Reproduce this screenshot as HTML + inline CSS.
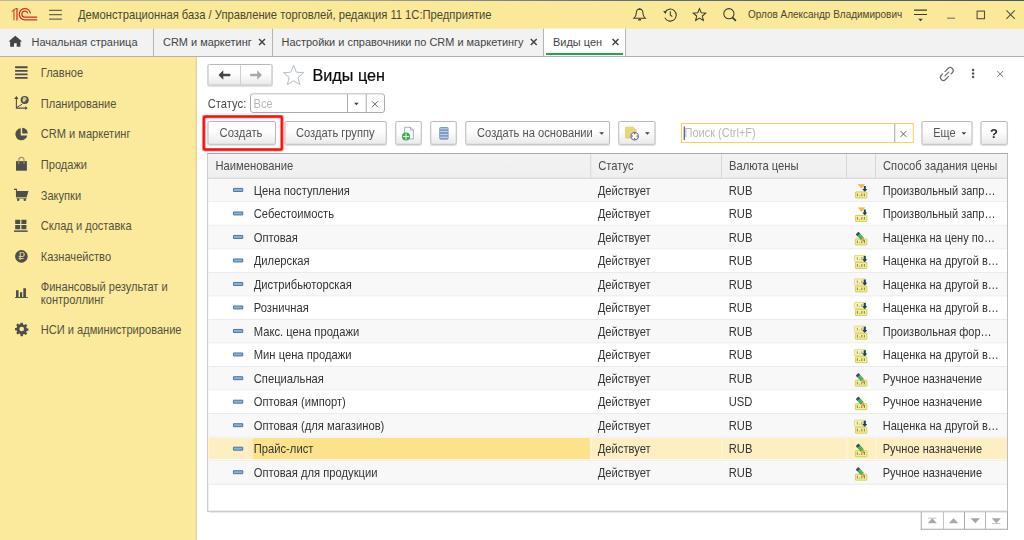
<!DOCTYPE html>
<html lang="ru">
<head>
<meta charset="utf-8">
<title>Виды цен</title>
<style>
*{box-sizing:border-box;margin:0;padding:0}
html,body{width:1024px;height:540px;overflow:hidden;background:#fff}
#sc{position:absolute;left:0;top:0;width:4096px;height:2160px;transform:scale(.25);transform-origin:0 0}
#zm{position:absolute;left:0;top:0;width:4096px;height:2160px}

body{position:relative;font-family:"Liberation Sans",sans-serif;font-size:48.4px;line-height:56px;color:#333;-webkit-font-smoothing:antialiased}
.abs,.t{position:absolute;white-space:nowrap}
.t,.c,.hc span{transform:scaleX(.926);transform-origin:0 50%}
.hc span{display:inline-block}
svg{position:absolute;overflow:visible}
.defs{width:0;height:0;left:-40px;top:-40px}
/* top bar */
.topline{position:absolute;left:0;top:0;width:4096px;height:4px;background:linear-gradient(90deg,#b9b7a6 0,#a9aba3 30%,#5d737d 60%,#3f5a68 100%)}
.topbar{position:absolute;left:0;top:0;width:4096px;height:116px;background:#fbe99a}
.title{left:312px;top:30.88px;color:#4a4635}
.user{left:2991.6px;top:28.64px;font-size:43.08px;color:#4a4635}
/* tabs */
.tabs{position:absolute;left:0;top:115px;width:4096px;height:113px;background:#f2f2f2;border-bottom:4px solid #b2b2b2}
.tabsep{position:absolute;top:115px;width:4px;height:109px;background:#b4b4b4}
.tabact{position:absolute;left:2176px;top:115px;width:326px;height:109px;background:#fff}
.tabul{position:absolute;left:2184px;top:212px;width:308px;height:8px;background:#21a453}
.tab{top:139.24px;color:#444;font-size:47.32px}
/* sidebar */
.side{position:absolute;left:0;top:228px;width:787px;height:1932px;background:#fbea9c;border-right:4px solid #d9cd8e}
.si{left:163.2px;color:#55513f;font-size:47.88px}
/* content */
.btn{position:absolute;top:484px;height:95px;border:4px solid #b9b9b9;border-radius:8px;background:linear-gradient(#ffffff 0,#fdfdfd 45%,#eaeaea 100%);box-shadow:0 3px 3px rgba(0,0,0,.13);color:#444;text-align:center;white-space:nowrap}
.btn span{position:absolute;top:15px;left:0;white-space:nowrap;font-size:48px;color:#555;transform-origin:0 50%}
.h1{transform:none;left:1250px;top:259.6px;font-size:64.8px;line-height:80px;color:#0a0a0a;-webkit-text-stroke:0.8px #0a0a0a}
.lbl{left:831px;top:386.88px;color:#4a4a4a}
.inp{position:absolute;left:1000px;top:373px;width:540px;height:79px;border:4px solid #ababab;border-radius:12px;background:#fff}
.inp i{position:absolute;top:0;width:4px;height:71px;background:#ababab}
.ph{color:#b9b9b9}
.srch{position:absolute;left:2724px;top:492px;width:931px;height:80px;border:4px solid #f8d05c;background:#fff}
.srch i{position:absolute;left:849px;top:0;width:4px;height:72px;background:#a5a5a5}
.red{position:absolute;left:810px;top:461px;width:323px;height:143px;border:11px solid #ff0808;border-radius:8px}
/* grid */
.grid{position:absolute;left:829px;top:612px;width:3203px;height:1435px;border:4px solid #bdbdbd;border-top-color:#a9a9a9;background:#fff;overflow:hidden;box-shadow:0 3px 3px rgba(0,0,0,.08)}
.ghead{position:absolute;left:0;top:0;width:3200px;height:99.2px;background:linear-gradient(#f3f3f3,#efefef);border-bottom:4px solid #c4c4c4}
.hc{position:absolute;top:0;height:96px;border-right:4px solid #d6d6d6;padding:18.88px 0 0 28.4px;color:#4a4a4a;white-space:nowrap;overflow:hidden}
.hc.last{border-right:0}
.row{position:absolute;left:0;width:3200px;height:94.12px;border-bottom:4px solid #ebebeb;background:#fff}
.row.alt{background:#f8f8f8}
.row.sel{background:#fdfdfd}
.hl{position:absolute;left:0;top:1.6px;width:3200px;height:84.4px;background:#fdefc2}
.hl i{position:absolute;top:0;width:4px;height:84.4px;background:#fef7e0}
.cur{position:absolute;left:178px;top:1.6px;width:1348px;height:84.4px;background:#fde28c}
.c{position:absolute;top:0;white-space:nowrap;color:#343434}
.c1{left:181.6px}.c2{left:1558px}.c3{left:2082px}.c5{left:2698.4px;font-size:47.64px}
.bar{left:99px;top:36.4px}
.mi{left:2583px;top:20.6px}

</style>
</head>
<body>
<div id="sc"><div id="zm">
<div class="topbar"></div>
<div class="topline"></div>
<svg style="left:0;top:0" width="160" height="112" viewBox="0 0 40 28">
 <path d="M11.5 11.7L13.95 10V20.4" fill="none" stroke="#de2a26" stroke-width="1"/><path d="M13.2 9.4L16.3 7.9H17.6V20.4H16.35V9.1L13.6 10.3z" fill="#de2a26"/>
 <path d="M30.45 13.6A5.6 5.6 0 1 0 24.9 19.8H37.2" fill="none" stroke="#de2a26" stroke-width="1.2"/>
 <path d="M27.85 13.3A3.05 3.05 0 1 0 24.9 17.2H37.2" fill="none" stroke="#de2a26" stroke-width="1.2"/>
</svg>
<svg style="left:196px;top:39.2px" width="52" height="44" viewBox="0 0 13 11"><path d="M.1 .65h12.8M.1 4.9h12.8M.1 9.4h12.8" stroke="#6a664e" stroke-width="1.15"/></svg>
<div class="t title">Демонстрационная база / Управление торговлей, редакция 11 1С:Предприятие</div>
<svg style="left:2532px;top:32px" width="56" height="56" viewBox="0 0 14 14"><path d="M6.6 1.1c-2.3 0-3.3 1.7-3.3 3.8 0 2.7-1.1 4.1-2.5 5.4h11.6c-1.4-1.3-2.5-2.7-2.5-5.4 0-2.1-1-3.8-3.3-3.8z" fill="none" stroke="#3c3a30" stroke-width="1.05"/><path d="M5.2 11.8h2.8" stroke="#3c3a30" stroke-width="1.4"/><path d="M6.6 0.3v1" stroke="#3c3a30" stroke-width="1.2"/></svg>
<svg style="left:2650px;top:32px" width="60" height="56" viewBox="0 0 15 14"><path d="M2.5 4.2A6 6 0 1 1 2.3 9.6" fill="none" stroke="#3c3a30" stroke-width="1.05"/><path d="M0.5 3.3l3.6-.4-.9 3.2z" fill="#3c3a30"/><path d="M7.8 3.2v3.8l2 1.7" fill="none" stroke="#3c3a30" stroke-width="1.05"/></svg>
<svg style="left:2770px;top:31.2px" width="56" height="56" viewBox="0 0 14 14"><path d="M7 0.9l1.75 4.1 4.45.35-3.4 2.9 1.05 4.35L7 10.25 3.15 12.6 4.2 8.25.8 5.35l4.45-.35z" fill="none" stroke="#3c3a30" stroke-width="1.05" stroke-linejoin="miter"/></svg>
<svg style="left:2892px;top:32px" width="56" height="56" viewBox="0 0 14 14"><circle cx="5.9" cy="5.7" r="5.1" fill="none" stroke="#3c3a30" stroke-width="1.05"/><path d="M9.6 9.6l3.3 3.2" stroke="#3c3a30" stroke-width="1.7"/></svg>
<div class="t user">Орлов Александр Владимирович</div>
<svg style="left:3656px;top:38px" width="56" height="48" viewBox="0 0 14 12"><path d="M0 .6h13M0 5h13" stroke="#3c3a30" stroke-width="1.1"/><path d="M4.2 9.2h4.6l-2.3 2.6z" fill="#3c3a30"/></svg>
<svg style="left:3788px;top:69.6px" width="36" height="8" viewBox="0 0 9 2"><path d="M0 .7h8" stroke="#8c8870" stroke-width="1.3"/></svg>
<svg style="left:3906px;top:42px" width="36" height="36" viewBox="0 0 9 9"><rect x=".6" y=".6" width="7.4" height="7.6" fill="none" stroke="#55513f" stroke-width="1.1"/></svg>
<svg style="left:4024px;top:40px" width="40" height="40" viewBox="0 0 10 10"><path d="M.4.3l8.4 8.6M8.8.300L.4 8.9" stroke="#55513f" stroke-width="1.1"/></svg>

<div class="tabs"></div>
<div class="tabact"></div>
<div class="tabsep" style="left:612px"></div>
<div class="tabsep" style="left:1088px"></div>
<div class="tabsep" style="left:2172px"></div>
<div class="tabsep" style="left:2500px"></div>
<div class="tabul"></div>
<svg style="left:32px;top:140px" width="64" height="52" viewBox="8 35 16 13"><path d="M15.3 35.7L22.1 41.5H20.4V46.8H16.7V43.3H14V46.8H10.1V41.5H8.5z" fill="#444"/></svg>
<div class="t tab" style="left:126px">Начальная страница</div>
<div class="t tab" style="left:652px">CRM и маркетинг</div>
<svg style="left:1034px;top:154.4px" width="28" height="28" viewBox="0 0 6.4 6.4"><path d="M0.5 0.5l5.4 5.4M5.9 0.5L0.5 5.9" stroke="#3e3e3e" stroke-width="1.3" fill="none"/></svg>
<div class="t tab" style="left:1126px">Настройки и справочники по CRM и маркетингу</div>
<svg style="left:2121.2px;top:154.4px" width="28" height="28" viewBox="0 0 6.4 6.4"><path d="M0.5 0.5l5.4 5.4M5.9 0.5L0.5 5.9" stroke="#3e3e3e" stroke-width="1.3" fill="none"/></svg>
<div class="t tab" style="left:2212px">Виды цен</div>
<svg style="left:2448px;top:154.4px" width="28" height="28" viewBox="0 0 6.4 6.4"><path d="M0.5 0.5l5.4 5.4M5.9 0.5L0.5 5.9" stroke="#3e3e3e" stroke-width="1.3" fill="none"/></svg>
<div class="side"></div>
<svg style="left:60px;top:265.2px" width="52" height="52" viewBox="0 0 13 13"><path d="M0.1 1h12.5M0.1 4.55h12.5M0.1 8.1h12.5M0.1 11.65h12.5" stroke="#4e4e4e" stroke-width="1.85"/></svg>
<div class="t si" style="top:263.04px">Главное</div>
<svg style="left:48px;top:376px" width="80" height="72" viewBox="12 94 20 18"><path d="M16.4 97.5V108.1H25.6" fill="none" stroke="#4e4e4e" stroke-width="1.1"/><path d="M14.2 99L16.4 95.9 18.6 99zM25.2 106.2L27.8 108.1 25.2 110z" fill="#4e4e4e"/><path d="M16.8 107.4L22 104.3" stroke="#4e4e4e" stroke-width="1"/><circle cx="24.7" cy="99.9" r="4" fill="#4e4e4e"/><text x="24.6" y="102.3" text-anchor="middle" font-family="DejaVu Sans, sans-serif" font-weight="bold" font-size="6.4" fill="#e6d994">₽</text></svg>
<div class="t si" style="top:387.04px">Планирование</div>
<svg style="left:58.8px;top:511.2px" width="53.6" height="53.6" viewBox="0 0 13 13"><path d="M5.8.6A5.8 5.8 0 1 0 12.1 7.4H5.8z" fill="#4e4e4e"/><path d="M7.2 0A5.4 5.4 0 0 1 12.6 5.6H7.2z" fill="#4e4e4e"/></svg>
<div class="t si" style="top:507.04px">CRM и маркетинг</div>
<svg style="left:56px;top:620px" width="64" height="72" viewBox="14 155 16 18"><path d="M16 161.1H26.9V170.7H16z" fill="#4e4e4e"/><path d="M18.8 164V160a2.6 2.6 0 0 1 5.2 0V164" fill="none" stroke="#9c966e" stroke-width="1.15"/></svg>
<div class="t si" style="top:631.04px">Продажи</div>
<svg style="left:48px;top:744px" width="80" height="72" viewBox="12 186 20 18"><path d="M14 189.4h2.5v7.8" fill="none" stroke="#4e4e4e" stroke-width="1.1"/><path d="M16.5 191H28.5L26.7 196.9H16.5z" fill="#4e4e4e"/><path d="M16.5 198.1H26.9" stroke="#4e4e4e" stroke-width=".9"/><rect x="17.1" y="198.4" width="2.2" height="2.7" rx=".8" fill="#4e4e4e"/><rect x="23.7" y="198.4" width="2.2" height="2.7" rx=".8" fill="#4e4e4e"/></svg>
<div class="t si" style="top:755.04px">Закупки</div>
<svg style="left:56px;top:878.8px" width="56" height="52" viewBox="0 0 14 13"><path d="M1.2 0h5v4.3h-5zM7.4 0h5v4.3h-5zM1.2 5.3h5v4.3h-5zM7.4 5.3h5v4.3h-5z" fill="#4e4e4e"/><path d="M0 11.4h13.7" stroke="#4e4e4e" stroke-width="1.5"/></svg>
<div class="t si" style="top:875.04px">Склад и доставка</div>
<svg style="left:60px;top:1000px" width="52" height="52" viewBox="0 0 13 13"><circle cx="6.4" cy="6.4" r="6.3" fill="#4e4e4e"/><text x="6.7" y="10.3" text-anchor="middle" font-family="DejaVu Sans, sans-serif" font-size="10.6" fill="#d9cc8a">₽</text></svg>
<div class="t si" style="top:999.04px">Казначейство</div>
<svg style="left:60px;top:1153.2px" width="52" height="40" viewBox="0 0 13 10"><path d="M1 1.9h2.6v7H1zM5 3.9h2.2v5H5zM8.3 -.1h2.7v9H8.3z" fill="#4e4e4e"/><path d="M0.1 9.25h12.7" stroke="#4e4e4e" stroke-width=".95"/></svg>
<div class="t si" style="top:1121.04px;line-height:52px">Финансовый результат и<br>контроллинг</div>
<svg style="left:60px;top:1291.2px" width="52" height="52" viewBox="0 0 13 13"><path d="M5.3 0h2.2l.3 1.7 1.1.5 1.5-1 1.5 1.5-1 1.5.5 1.1 1.7.3v2.2l-1.7.3-.5 1.1 1 1.5-1.5 1.5-1.5-1-1.1.5-.3 1.7H5.3L5 11.2l-1.1-.5-1.5 1L.9 10.2l1-1.5-.5-1.1L-.3 7.3V5.1l1.7-.3.5-1.1-1-1.5L2.4.7l1.5 1L5 1.2z" fill="#4e4e4e" transform="translate(0.3,0.1)"/><circle cx="6.7" cy="6.3" r="2.3" fill="#fbea9c"/></svg>
<div class="t si" style="top:1291.04px">НСИ и администрирование</div>
<div class="btn" style="left:830px;top:256.4px;width:260px;height:85.2px"></div>
<div class="abs" style="left:960px;top:262.4px;width:4px;height:76px;background:#cfcfcf"></div>
<svg style="left:874px;top:281.2px" width="48" height="40" viewBox="0 0 12 10"><path d="M0 4.8L4.8 0v3.5h7v2.6h-7v3.5z" fill="#444"/></svg>
<svg style="left:1000px;top:281.2px" width="48" height="40" viewBox="0 0 12 10"><path d="M12 4.8L7.2 0v3.5h-7v2.6h7v3.5z" fill="#a8a8a8"/></svg>
<svg style="left:1128.8px;top:257.2px" width="92.4" height="88" viewBox="0 0 21 20"><path d="M10.3 1l2.5 6.2 6.6.5-5.1 4.3 1.6 6.5-5.6-3.5-5.6 3.5 1.6-6.5L1.2 7.7l6.6-.5z" fill="#fff" stroke="#b4bcc6" stroke-width=".9"/></svg>
<div class="t h1">Виды цен</div>
<svg style="left:3744px;top:256px" width="88" height="80" viewBox="936 64 22 20"><g transform="translate(946.8 74) rotate(-45)" fill="none" stroke="#6b6b6b" stroke-width="1.15" stroke-linecap="round"><path d="M0.4 -3H4.8A3 3 0 0 1 4.8 3H3"/><path d="M-0.4 3H-4.8A3 3 0 0 1 -4.8 -3H-3"/><path d="M-2.7 0H2.7"/></g></svg>
<svg style="left:3886px;top:275.2px" width="16" height="40" viewBox="0 0 4 10"><circle cx="1.6" cy="1.3" r="1.25" fill="#555"/><circle cx="1.6" cy="4.8" r="1.25" fill="#555"/><circle cx="1.6" cy="8.3" r="1.25" fill="#555"/></svg>
<svg style="left:3988px;top:283.2px" width="25.6" height="25.6" viewBox="0 0 6.4 6.4"><path d="M.3 .3l5.8 5.8M6.1 .3L.3 6.1" stroke="#707070" stroke-width="1" fill="none"/></svg>

<div class="t lbl">Статус:</div>
<div class="inp"><i style="left:384px"></i><i style="left:459px"></i></div>
<div class="t ph" style="left:1014px;top:386.88px">Все</div>
<svg style="left:1416.4px;top:410.6px" width="19.2" height="10.4" viewBox="0 0 4.8 2.6"><path d="M0 0h4.8L2.4 2.6z" fill="#444"/></svg>
<svg style="left:1487.2px;top:403.6px" width="25.6" height="25.6" viewBox="0 0 6.4 6.4"><path d="M.3 .3l5.8 5.8M6.1 .3L.3 6.1" stroke="#5a5a5a" stroke-width=".95" fill="none"/></svg>

<div class="btn" style="left:830px;width:274px"><span style="left:44px;transform:scaleX(.943)">Создать</span></div>
<div class="btn" style="left:1138px;width:409px"><span style="left:41.6px;transform:scaleX(.925)">Создать группу</span></div>
<div class="btn" style="left:1581.2px;width:106px"></div>
<svg style="left:1608px;top:507.2px" width="48" height="56" viewBox="0 0 12 14"><path d="M2.6 .5h6L11.4 3.3v8.9H2.6z" fill="#fdfdfd" stroke="#9aa9bd" stroke-width=".9"/><path d="M8.5 .5v2.9h2.9" fill="none" stroke="#9aa9bd" stroke-width=".9"/><circle cx="4" cy="9.7" r="4.05" fill="#35ad4a"/><path d="M1 9.7h6M4 6.7V12.7" stroke="#e9f7ea" stroke-width="1.1"/></svg>
<div class="btn" style="left:1721.2px;width:106px"></div>
<svg style="left:1756px;top:507.2px" width="40" height="56" viewBox="0 0 10 14"><rect x=".2" y=".2" width="9.4" height="12.9" rx="1.8" fill="#7b9dbf"/><path d="M1.1 1.9h7.6M1.1 4.8h7.6M1.1 7.7h7.6M1.1 10.6h7.6" stroke="#bcd3e8" stroke-width="1.05"/></svg>
<div class="btn" style="left:1861.2px;width:578.8px"><span style="left:43.2px;transform:scaleX(.93)">Создать на основании</span></div>
<svg style="left:2397.2px;top:529.4px" width="19.2" height="10.4" viewBox="0 0 4.8 2.6"><path d="M0 0h4.8L2.4 2.6z" fill="#444"/></svg>
<div class="btn" style="left:2473.2px;width:149.2px"></div>
<svg style="left:2501.2px;top:507.2px" width="56" height="56" viewBox="0 0 14 14"><path d="M.4.4h7.4l3 3v7.8H.4z" fill="#eed477" stroke="#dcc25e" stroke-width=".7"/><circle cx="9.4" cy="9.4" r="3.7" fill="#fff" stroke="#3f74b8" stroke-width="1.1"/><path d="M9.4 6.2v1.4M9.4 11.2v1.4M6.2 9.4h1.4M11.2 9.4h1.4" stroke="#d94a3a" stroke-width="1.3"/></svg>
<svg style="left:2580.4px;top:529.4px" width="19.2" height="10.4" viewBox="0 0 4.8 2.6"><path d="M0 0h4.8L2.4 2.6z" fill="#444"/></svg>
<div class="srch"><i></i></div>
<div class="abs" style="left:2735px;top:506px;width:4px;height:54px;background:#3a3a3a"></div>
<div class="t ph" style="left:2738.4px;top:503.12px;font-size:47.64px">Поиск (Ctrl+F)</div>
<svg style="left:3600.8px;top:522.8px" width="25.6" height="25.6" viewBox="0 0 6.4 6.4"><path d="M.3 .3l5.8 5.8M6.1 .3L.3 6.1" stroke="#5a5a5a" stroke-width=".95" fill="none"/></svg>
<div class="btn" style="left:3686px;width:204px"><span style="left:42.8px;transform:scaleX(.915)">Еще</span></div>
<svg style="left:3846.4px;top:529.4px" width="19.2" height="10.4" viewBox="0 0 4.8 2.6"><path d="M0 0h4.8L2.4 2.6z" fill="#444"/></svg>
<div class="btn" style="left:3921.6px;width:109.2px"><span style="font-weight:bold;font-size:52px;color:#2a2a2a;top:17.6px;left:34.8px">?</span></div>
<div class="red"></div>
<div class="grid">
<div class="ghead"><div class="hc" style="left:0;width:1532px;padding-left:29.2px"><span>Наименование</span></div><div class="hc" style="left:1532px;width:523px"><span>Статус</span></div><div class="hc" style="left:2055px;width:500px"><span>Валюта цены</span></div><div class="hc" style="left:2555px;width:116px"></div><div class="hc last" style="left:2671px;width:528px"><span>Способ задания цены</span></div></div>
<div class="row alt" style="top:99.2px"><svg class="bar" width="48" height="24" viewBox="0 0 12 6"><rect x="0.45" y="0.45" width="9.3" height="3" rx="0.1" fill="#86b3dc" stroke="#3f6b98" stroke-width="0.9"/></svg><span class="c c1" style="top:19.68px">Цена поступления</span><span class="c c2" style="top:19.68px">Действует</span><span class="c c3" style="top:19.68px">RUB</span><svg class="mi" width="60" height="60" viewBox="-1 0 15 15"><path d="M2.7 .1h7.4L6.4 4.4z" fill="#f2b63c"/><path d="M3.6 .5h5.6" stroke="#f7d27a" stroke-width=".6"/><path d="M8.8 2h2v3h1.5L9.8 7.9 7.3 5h1.5z" fill="#21405a"/><rect x=".4" y="7.95" width="11.5" height="6" rx=".5" fill="#f5ef96" stroke="#d1c443" stroke-width=".8"/><path d="M2.4 9.6 v2.6M4.7 11.6 v.6M6.8 9.6 v2.6M9.4 9.6 v2.6" stroke="#8d8b66" stroke-width="1.1" fill="none"/></svg><span class="c c5" style="top:19.92px">Произвольный запр…</span></div>
<div class="row" style="top:193.32px"><svg class="bar" width="48" height="24" viewBox="0 0 12 6"><rect x="0.45" y="0.45" width="9.3" height="3" rx="0.1" fill="#86b3dc" stroke="#3f6b98" stroke-width="0.9"/></svg><span class="c c1" style="top:17.56px">Себестоимость</span><span class="c c2" style="top:17.56px">Действует</span><span class="c c3" style="top:17.56px">RUB</span><svg class="mi" width="60" height="60" viewBox="-1 0 15 15"><path d="M2.7 .1h7.4L6.4 4.4z" fill="#f2b63c"/><path d="M3.6 .5h5.6" stroke="#f7d27a" stroke-width=".6"/><path d="M8.8 2h2v3h1.5L9.8 7.9 7.3 5h1.5z" fill="#21405a"/><rect x=".4" y="7.95" width="11.5" height="6" rx=".5" fill="#f5ef96" stroke="#d1c443" stroke-width=".8"/><path d="M2.4 9.6 v2.6M4.7 11.6 v.6M6.8 9.6 v2.6M9.4 9.6 v2.6" stroke="#8d8b66" stroke-width="1.1" fill="none"/></svg><span class="c c5" style="top:17.8px">Произвольный запр…</span></div>
<div class="row alt" style="top:287.44px"><svg class="bar" width="48" height="24" viewBox="0 0 12 6"><rect x="0.45" y="0.45" width="9.3" height="3" rx="0.1" fill="#86b3dc" stroke="#3f6b98" stroke-width="0.9"/></svg><span class="c c1" style="top:19.44px">Оптовая</span><span class="c c2" style="top:19.44px">Действует</span><span class="c c3" style="top:19.44px">RUB</span><svg class="mi" width="60" height="60" viewBox="-1 0 15 15"><rect x=".4" y="7.95" width="11.5" height="6" rx=".5" fill="#f5ef96" stroke="#d1c443" stroke-width=".8"/><path d="M2.4 9.6 v2.6M4.7 11.6 v.6M6.8 9.6 v2.6M9.4 9.6 v2.6" stroke="#8d8b66" stroke-width="1.1" fill="none"/><g transform="translate(2.1 2) rotate(48)"><rect x="0" y="-1.9" width="2.8" height="3.8" rx=".5" fill="#3f4c5c"/><rect x="2.8" y="-1.9" width="5" height="3.8" fill="#3fb04f"/><path d="M2.8 -0.6h5" stroke="#5cc96b" stroke-width=".9"/><path d="M7.8 -1.9L11.2 0 7.8 1.9z" fill="#e7a04d"/><path d="M10 -.7L11.4 0l-1.4.7z" fill="#3a3a3a"/></g></svg><span class="c c5" style="top:19.68px">Наценка на цену по…</span></div>
<div class="row" style="top:381.56px"><svg class="bar" width="48" height="24" viewBox="0 0 12 6"><rect x="0.45" y="0.45" width="9.3" height="3" rx="0.1" fill="#86b3dc" stroke="#3f6b98" stroke-width="0.9"/></svg><span class="c c1" style="top:17.32px">Дилерская</span><span class="c c2" style="top:17.32px">Действует</span><span class="c c3" style="top:17.32px">RUB</span><svg class="mi" width="60" height="60" viewBox="-1 0 15 15"><rect x="-.6" y=".9" width="11.2" height="6" rx=".5" fill="#f8f4b8" stroke="#ddd37a" stroke-width=".8"/><path d="M2.4 2.6 v2.6M4.7 4.6 v.6M6.8 2.6 v2.6M9.4 2.6 v2.6" stroke="#a3a188" stroke-width="1.1" fill="none"/><path d="M8.7 1.5h2.1v3.3h1.5L9.75 7.8 7.2 4.8h1.5z" fill="#21405a"/><rect x=".4" y="7.95" width="11.5" height="6" rx=".5" fill="#f5ef96" stroke="#d1c443" stroke-width=".8"/><path d="M2.4 9.6 v2.6M4.7 11.6 v.6M6.8 9.6 v2.6M9.4 9.6 v2.6" stroke="#8d8b66" stroke-width="1.1" fill="none"/></svg><span class="c c5" style="top:17.56px">Наценка на другой в…</span></div>
<div class="row alt" style="top:475.68px"><svg class="bar" width="48" height="24" viewBox="0 0 12 6"><rect x="0.45" y="0.45" width="9.3" height="3" rx="0.1" fill="#86b3dc" stroke="#3f6b98" stroke-width="0.9"/></svg><span class="c c1" style="top:19.2px">Дистрибьюторская</span><span class="c c2" style="top:19.2px">Действует</span><span class="c c3" style="top:19.2px">RUB</span><svg class="mi" width="60" height="60" viewBox="-1 0 15 15"><rect x="-.6" y=".9" width="11.2" height="6" rx=".5" fill="#f8f4b8" stroke="#ddd37a" stroke-width=".8"/><path d="M2.4 2.6 v2.6M4.7 4.6 v.6M6.8 2.6 v2.6M9.4 2.6 v2.6" stroke="#a3a188" stroke-width="1.1" fill="none"/><path d="M8.7 1.5h2.1v3.3h1.5L9.75 7.8 7.2 4.8h1.5z" fill="#21405a"/><rect x=".4" y="7.95" width="11.5" height="6" rx=".5" fill="#f5ef96" stroke="#d1c443" stroke-width=".8"/><path d="M2.4 9.6 v2.6M4.7 11.6 v.6M6.8 9.6 v2.6M9.4 9.6 v2.6" stroke="#8d8b66" stroke-width="1.1" fill="none"/></svg><span class="c c5" style="top:19.44px">Наценка на другой в…</span></div>
<div class="row" style="top:569.8px"><svg class="bar" width="48" height="24" viewBox="0 0 12 6"><rect x="0.45" y="0.45" width="9.3" height="3" rx="0.1" fill="#86b3dc" stroke="#3f6b98" stroke-width="0.9"/></svg><span class="c c1" style="top:17.08px">Розничная</span><span class="c c2" style="top:17.08px">Действует</span><span class="c c3" style="top:17.08px">RUB</span><svg class="mi" width="60" height="60" viewBox="-1 0 15 15"><rect x="-.6" y=".9" width="11.2" height="6" rx=".5" fill="#f8f4b8" stroke="#ddd37a" stroke-width=".8"/><path d="M2.4 2.6 v2.6M4.7 4.6 v.6M6.8 2.6 v2.6M9.4 2.6 v2.6" stroke="#a3a188" stroke-width="1.1" fill="none"/><path d="M8.7 1.5h2.1v3.3h1.5L9.75 7.8 7.2 4.8h1.5z" fill="#21405a"/><rect x=".4" y="7.95" width="11.5" height="6" rx=".5" fill="#f5ef96" stroke="#d1c443" stroke-width=".8"/><path d="M2.4 9.6 v2.6M4.7 11.6 v.6M6.8 9.6 v2.6M9.4 9.6 v2.6" stroke="#8d8b66" stroke-width="1.1" fill="none"/></svg><span class="c c5" style="top:17.32px">Наценка на другой в…</span></div>
<div class="row alt" style="top:663.92px"><svg class="bar" width="48" height="24" viewBox="0 0 12 6"><rect x="0.45" y="0.45" width="9.3" height="3" rx="0.1" fill="#86b3dc" stroke="#3f6b98" stroke-width="0.9"/></svg><span class="c c1" style="top:18.96px">Макс. цена продажи</span><span class="c c2" style="top:18.96px">Действует</span><span class="c c3" style="top:18.96px">RUB</span><svg class="mi" width="60" height="60" viewBox="-1 0 15 15"><rect x="-.6" y=".9" width="11.2" height="6" rx=".5" fill="#f8f4b8" stroke="#ddd37a" stroke-width=".8"/><path d="M2.4 2.6 v2.6M4.7 4.6 v.6M6.8 2.6 v2.6M9.4 2.6 v2.6" stroke="#a3a188" stroke-width="1.1" fill="none"/><path d="M8.7 1.5h2.1v3.3h1.5L9.75 7.8 7.2 4.8h1.5z" fill="#21405a"/><rect x=".4" y="7.95" width="11.5" height="6" rx=".5" fill="#f5ef96" stroke="#d1c443" stroke-width=".8"/><path d="M2.4 9.6 v2.6M4.7 11.6 v.6M6.8 9.6 v2.6M9.4 9.6 v2.6" stroke="#8d8b66" stroke-width="1.1" fill="none"/></svg><span class="c c5" style="top:19.2px">Произвольная фор…</span></div>
<div class="row" style="top:758.04px"><svg class="bar" width="48" height="24" viewBox="0 0 12 6"><rect x="0.45" y="0.45" width="9.3" height="3" rx="0.1" fill="#86b3dc" stroke="#3f6b98" stroke-width="0.9"/></svg><span class="c c1" style="top:16.84px">Мин цена продажи</span><span class="c c2" style="top:16.84px">Действует</span><span class="c c3" style="top:16.84px">RUB</span><svg class="mi" width="60" height="60" viewBox="-1 0 15 15"><rect x="-.6" y=".9" width="11.2" height="6" rx=".5" fill="#f8f4b8" stroke="#ddd37a" stroke-width=".8"/><path d="M2.4 2.6 v2.6M4.7 4.6 v.6M6.8 2.6 v2.6M9.4 2.6 v2.6" stroke="#a3a188" stroke-width="1.1" fill="none"/><path d="M8.7 1.5h2.1v3.3h1.5L9.75 7.8 7.2 4.8h1.5z" fill="#21405a"/><rect x=".4" y="7.95" width="11.5" height="6" rx=".5" fill="#f5ef96" stroke="#d1c443" stroke-width=".8"/><path d="M2.4 9.6 v2.6M4.7 11.6 v.6M6.8 9.6 v2.6M9.4 9.6 v2.6" stroke="#8d8b66" stroke-width="1.1" fill="none"/></svg><span class="c c5" style="top:17.08px">Наценка на другой в…</span></div>
<div class="row alt" style="top:852.16px"><svg class="bar" width="48" height="24" viewBox="0 0 12 6"><rect x="0.45" y="0.45" width="9.3" height="3" rx="0.1" fill="#86b3dc" stroke="#3f6b98" stroke-width="0.9"/></svg><span class="c c1" style="top:18.72px">Специальная</span><span class="c c2" style="top:18.72px">Действует</span><span class="c c3" style="top:18.72px">RUB</span><svg class="mi" width="60" height="60" viewBox="-1 0 15 15"><rect x=".4" y="7.95" width="11.5" height="6" rx=".5" fill="#f5ef96" stroke="#d1c443" stroke-width=".8"/><path d="M2.4 9.6 v2.6M4.7 11.6 v.6M6.8 9.6 v2.6M9.4 9.6 v2.6" stroke="#8d8b66" stroke-width="1.1" fill="none"/><g transform="translate(2.1 2) rotate(48)"><rect x="0" y="-1.9" width="2.8" height="3.8" rx=".5" fill="#3f4c5c"/><rect x="2.8" y="-1.9" width="5" height="3.8" fill="#3fb04f"/><path d="M2.8 -0.6h5" stroke="#5cc96b" stroke-width=".9"/><path d="M7.8 -1.9L11.2 0 7.8 1.9z" fill="#e7a04d"/><path d="M10 -.7L11.4 0l-1.4.7z" fill="#3a3a3a"/></g></svg><span class="c c5" style="top:18.96px">Ручное назначение</span></div>
<div class="row" style="top:946.28px"><svg class="bar" width="48" height="24" viewBox="0 0 12 6"><rect x="0.45" y="0.45" width="9.3" height="3" rx="0.1" fill="#86b3dc" stroke="#3f6b98" stroke-width="0.9"/></svg><span class="c c1" style="top:16.6px">Оптовая (импорт)</span><span class="c c2" style="top:16.6px">Действует</span><span class="c c3" style="top:16.6px">USD</span><svg class="mi" width="60" height="60" viewBox="-1 0 15 15"><rect x=".4" y="7.95" width="11.5" height="6" rx=".5" fill="#f5ef96" stroke="#d1c443" stroke-width=".8"/><path d="M2.4 9.6 v2.6M4.7 11.6 v.6M6.8 9.6 v2.6M9.4 9.6 v2.6" stroke="#8d8b66" stroke-width="1.1" fill="none"/><g transform="translate(2.1 2) rotate(48)"><rect x="0" y="-1.9" width="2.8" height="3.8" rx=".5" fill="#3f4c5c"/><rect x="2.8" y="-1.9" width="5" height="3.8" fill="#3fb04f"/><path d="M2.8 -0.6h5" stroke="#5cc96b" stroke-width=".9"/><path d="M7.8 -1.9L11.2 0 7.8 1.9z" fill="#e7a04d"/><path d="M10 -.7L11.4 0l-1.4.7z" fill="#3a3a3a"/></g></svg><span class="c c5" style="top:16.84px">Ручное назначение</span></div>
<div class="row alt" style="top:1040.4px"><svg class="bar" width="48" height="24" viewBox="0 0 12 6"><rect x="0.45" y="0.45" width="9.3" height="3" rx="0.1" fill="#86b3dc" stroke="#3f6b98" stroke-width="0.9"/></svg><span class="c c1" style="top:18.48px">Оптовая (для магазинов)</span><span class="c c2" style="top:18.48px">Действует</span><span class="c c3" style="top:18.48px">RUB</span><svg class="mi" width="60" height="60" viewBox="-1 0 15 15"><rect x="-.6" y=".9" width="11.2" height="6" rx=".5" fill="#f8f4b8" stroke="#ddd37a" stroke-width=".8"/><path d="M2.4 2.6 v2.6M4.7 4.6 v.6M6.8 2.6 v2.6M9.4 2.6 v2.6" stroke="#a3a188" stroke-width="1.1" fill="none"/><path d="M8.7 1.5h2.1v3.3h1.5L9.75 7.8 7.2 4.8h1.5z" fill="#21405a"/><rect x=".4" y="7.95" width="11.5" height="6" rx=".5" fill="#f5ef96" stroke="#d1c443" stroke-width=".8"/><path d="M2.4 9.6 v2.6M4.7 11.6 v.6M6.8 9.6 v2.6M9.4 9.6 v2.6" stroke="#8d8b66" stroke-width="1.1" fill="none"/></svg><span class="c c5" style="top:18.72px">Наценка на другой в…</span></div>
<div class="row sel" style="top:1134.52px"><div class="hl"><i style="left:1530px"></i><i style="left:2053px"></i><i style="left:2553px"></i><i style="left:2669px"></i></div><div class="cur"></div><svg class="bar" width="48" height="24" viewBox="0 0 12 6"><rect x="0.45" y="0.45" width="9.3" height="3" rx="0.1" fill="#86b3dc" stroke="#3f6b98" stroke-width="0.9"/></svg><span class="c c1" style="top:16.36px">Прайс-лист</span><span class="c c2" style="top:16.36px">Действует</span><span class="c c3" style="top:16.36px">RUB</span><svg class="mi" width="60" height="60" viewBox="-1 0 15 15"><rect x=".4" y="7.95" width="11.5" height="6" rx=".5" fill="#f5ef96" stroke="#d1c443" stroke-width=".8"/><path d="M2.4 9.6 v2.6M4.7 11.6 v.6M6.8 9.6 v2.6M9.4 9.6 v2.6" stroke="#8d8b66" stroke-width="1.1" fill="none"/><g transform="translate(2.1 2) rotate(48)"><rect x="0" y="-1.9" width="2.8" height="3.8" rx=".5" fill="#3f4c5c"/><rect x="2.8" y="-1.9" width="5" height="3.8" fill="#3fb04f"/><path d="M2.8 -0.6h5" stroke="#5cc96b" stroke-width=".9"/><path d="M7.8 -1.9L11.2 0 7.8 1.9z" fill="#e7a04d"/><path d="M10 -.7L11.4 0l-1.4.7z" fill="#3a3a3a"/></g></svg><span class="c c5" style="top:16.6px">Ручное назначение</span></div>
<div class="row alt" style="top:1228.64px"><svg class="bar" width="48" height="24" viewBox="0 0 12 6"><rect x="0.45" y="0.45" width="9.3" height="3" rx="0.1" fill="#86b3dc" stroke="#3f6b98" stroke-width="0.9"/></svg><span class="c c1" style="top:18.24px">Оптовая для продукции</span><span class="c c2" style="top:18.24px">Действует</span><span class="c c3" style="top:18.24px">RUB</span><svg class="mi" width="60" height="60" viewBox="-1 0 15 15"><rect x=".4" y="7.95" width="11.5" height="6" rx=".5" fill="#f5ef96" stroke="#d1c443" stroke-width=".8"/><path d="M2.4 9.6 v2.6M4.7 11.6 v.6M6.8 9.6 v2.6M9.4 9.6 v2.6" stroke="#8d8b66" stroke-width="1.1" fill="none"/><g transform="translate(2.1 2) rotate(48)"><rect x="0" y="-1.9" width="2.8" height="3.8" rx=".5" fill="#3f4c5c"/><rect x="2.8" y="-1.9" width="5" height="3.8" fill="#3fb04f"/><path d="M2.8 -0.6h5" stroke="#5cc96b" stroke-width=".9"/><path d="M7.8 -1.9L11.2 0 7.8 1.9z" fill="#e7a04d"/><path d="M10 -.7L11.4 0l-1.4.7z" fill="#3a3a3a"/></g></svg><span class="c c5" style="top:18.48px">Ручное назначение</span></div>
</div>
<div class="abs" style="left:3683px;top:2047px;width:349px;height:72.4px;border:4px solid #a9a9a9;border-top:0"></div>
<div class="abs" style="left:3771.6px;top:2047px;width:4px;height:68.8px;background:#c2c2c2"></div>
<div class="abs" style="left:3856px;top:2047px;width:4px;height:68.8px;background:#a9a9a9"></div>
<div class="abs" style="left:3939.6px;top:2047px;width:4px;height:68.8px;background:#b4b4b4"></div>
<svg style="left:3710.4px;top:2070.8px" width="38.4" height="24" viewBox="0 0 9.6 6"><path d="M.6 .4h8.4" stroke="#b5b5b5" stroke-width=".8"/><path d="M4.8 .6L9.4 5.5H.2z" fill="#a6a6a6"/></svg>
<svg style="left:3795.2px;top:2072.8px" width="38.4" height="20.8" viewBox="0 0 9.6 5.2"><path d="M4.8 0L9.5 5H.1z" fill="#a6a6a6"/></svg>
<svg style="left:3881.6px;top:2072.8px" width="38.4" height="20.8" viewBox="0 0 9.6 5.2"><path d="M4.8 5L9.5 0H.1z" fill="#a6a6a6"/></svg>
<svg style="left:3966.4px;top:2072.8px" width="38.4" height="24" viewBox="0 0 9.6 6"><path d="M4.8 5L9.4 .1H.2z" fill="#a6a6a6"/><path d="M.6 5.3h8.4" stroke="#b5b5b5" stroke-width=".8"/></svg>
</div></div>
</body>
</html>
